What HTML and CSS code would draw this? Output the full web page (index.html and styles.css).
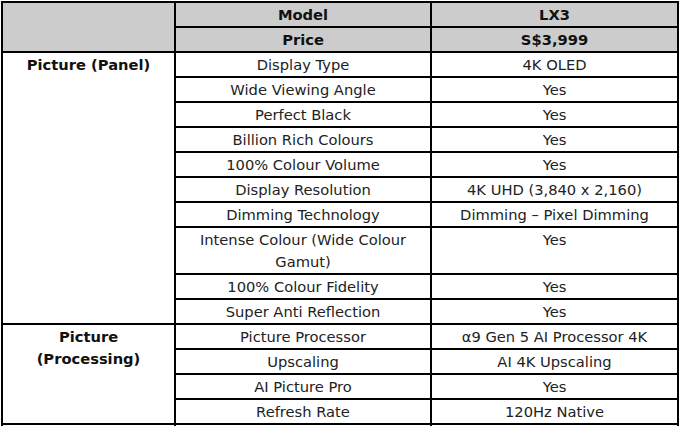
FILE: index.html
```html
<!DOCTYPE html>
<html>
<head>
<meta charset="utf-8">
<link rel="stylesheet" href="styles.css">
</head>
<body>
<div class="wrap">
<table class="spec">
  <colgroup><col class="c1"><col class="c2"><col class="c3"></colgroup>
  <tr class="head"><td rowspan="2"></td><th>Model</th><th>LX3</th></tr>
  <tr class="head"><th>Price</th><th>S$3,999</th></tr>
  <tr><td class="group" rowspan="10">Picture (Panel)</td><td>Display Type</td><td>4K OLED</td></tr>
  <tr><td>Wide Viewing Angle</td><td>Yes</td></tr>
  <tr><td>Perfect Black</td><td>Yes</td></tr>
  <tr><td>Billion Rich Colours</td><td>Yes</td></tr>
  <tr><td>100% Colour Volume</td><td>Yes</td></tr>
  <tr><td>Display Resolution</td><td>4K UHD (3,840 x 2,160)</td></tr>
  <tr><td>Dimming Technology</td><td>Dimming – Pixel Dimming</td></tr>
  <tr><td>Intense Colour (Wide Colour Gamut)</td><td>Yes</td></tr>
  <tr><td>100% Colour Fidelity</td><td>Yes</td></tr>
  <tr><td>Super Anti Reflection</td><td>Yes</td></tr>
  <tr><td class="group" rowspan="4">Picture (Processing)</td><td>Picture Processor</td><td>α9 Gen 5 AI Processor 4K</td></tr>
  <tr><td>Upscaling</td><td>AI 4K Upscaling</td></tr>
  <tr><td>AI Picture Pro</td><td>Yes</td></tr>
  <tr><td>Refresh Rate</td><td>120Hz Native</td></tr>
  <tr><td class="group">&nbsp;</td><td>&nbsp;</td><td>&nbsp;</td></tr>
</table>
</div>
</body>
</html>
```
FILE: styles.css
```css
html, body {
  margin: 0;
  padding: 0;
  background: #fff;
}
.wrap {
  padding: 1px 0 0 1px;
}
.spec {
  border-collapse: collapse;
  width: 676px;
  table-layout: fixed;
  font-family: "DejaVu Sans", Verdana, sans-serif;
  font-size: 14.7px;
  color: #222;
}
.c1 { width: 173px; }
.c2 { width: 256px; }
.c3 { width: 247px; }
.spec td, .spec th {
  border: 2px solid #000;
  padding: 1px 6px 0;
  line-height: 22px;
  text-align: center;
  vertical-align: top;
}
.head td, .head th {
  background: #cccccc;
  font-weight: bold;
  color: #111;
}
.spec td.group {
  font-weight: bold;
  color: #111;
}
```
